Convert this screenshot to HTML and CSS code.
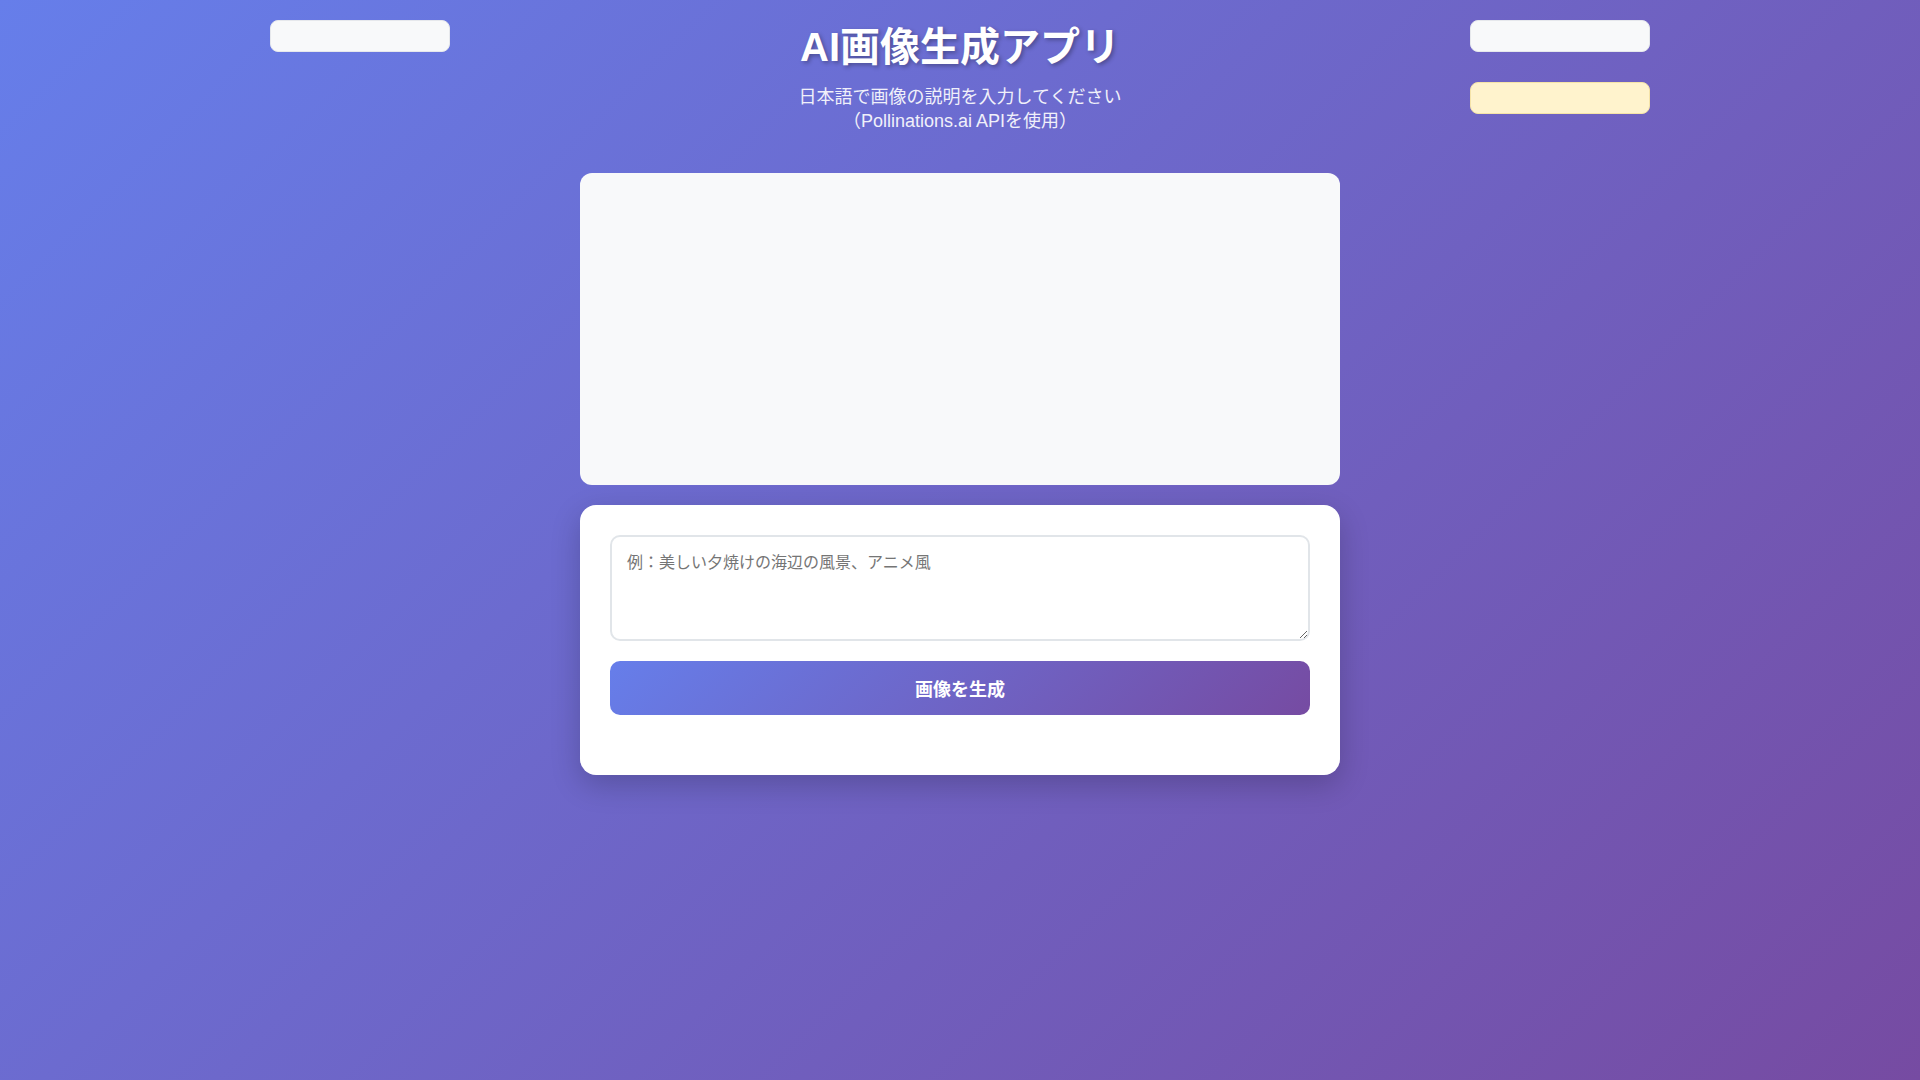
FILE: index.html
```html
<!DOCTYPE html>
<html lang="ja">
<head>
<meta charset="UTF-8">
<title>AI画像生成アプリ</title>
<link rel="stylesheet" href="styles.css">
</head>
<body>
<div class="page">
  <header class="header">
    <div class="side side-left">
      <div class="pill pill-light"></div>
    </div>
    <div class="titles">
      <h1 class="title">AI画像生成アプリ</h1>
      <p class="subtitle">日本語で画像の説明を入力してください<br>（Pollinations.ai APIを使用）</p>
    </div>
    <div class="side side-right">
      <div class="pill pill-light"></div>
      <div class="pill pill-warn"></div>
    </div>
  </header>
  <main class="main">
    <div class="image-box"></div>
    <section class="card">
      <textarea class="prompt" placeholder="例：美しい夕焼けの海辺の風景、アニメ風"></textarea>
      <button class="generate" type="button">画像を生成</button>
      <div class="status"></div>
    </section>
  </main>
</div>
</body>
</html>
```
FILE: styles.css
```css
* { box-sizing: border-box; }
html, body { height: 100%; }
body {
  margin: 0;
  min-height: 100vh;
  font-family: "Liberation Sans", "Noto Sans CJK JP", sans-serif;
  background: linear-gradient(135deg, #667eea 0%, #764ba2 100%);
  color: #333;
}
.page {
  width: 1380px;
  margin: 0 auto;
  padding-top: 20px;
}
.header {
  display: grid;
  grid-template-columns: 180px 1fr 180px;
  align-items: start;
}
.side {
  display: flex;
  flex-direction: column;
  gap: 30px;
}
.pill {
  height: 32px;
  border-radius: 8px;
}
.pill-light {
  background: #f8f9fa;
  border: 1px solid #e6e8ec;
}
.pill-warn {
  background: #fff3cd;
  border: 1px solid #f5e3a8;
}
.titles {
  text-align: center;
  color: #fff;
  padding-top: 3px;
}
.title {
  margin: 0;
  font-size: 40px;
  line-height: 48px;
  font-weight: 700;
  text-shadow: 2px 2px 4px rgba(0, 0, 0, 0.3);
}
.subtitle {
  margin: 14px 0 0;
  font-size: 18px;
  line-height: 24px;
  opacity: 0.9;
}
.main {
  width: 760px;
  margin: 40px auto 0;
  display: flex;
  flex-direction: column;
  gap: 20px;
}
.image-box {
  height: 312px;
  background: #f8f9fa;
  border-radius: 12px;
}
.card {
  background: #fff;
  border-radius: 16px;
  padding: 30px;
  box-shadow: 0 10px 30px rgba(0, 0, 0, 0.2);
  display: flex;
  flex-direction: column;
}
.prompt {
  height: 106px;
  width: 100%;
  padding: 15px;
  border: 2px solid #e1e5e9;
  border-radius: 10px;
  font-family: "Liberation Sans", "Noto Sans CJK JP", sans-serif;
  font-size: 16px;
  line-height: 22px;
  color: #333;
  resize: vertical;
  outline: none;
}
.prompt::placeholder { color: #757575; }
.generate {
  margin-top: 20px;
  height: 54px;
  border: none;
  border-radius: 10px;
  background: linear-gradient(135deg, #667eea 0%, #764ba2 100%);
  color: #fff;
  font-family: "Liberation Sans", "Noto Sans CJK JP", sans-serif;
  font-size: 18px;
  font-weight: 700;
  cursor: pointer;
}
.status {
  height: 30px;
  margin-top: 0;
}
```
